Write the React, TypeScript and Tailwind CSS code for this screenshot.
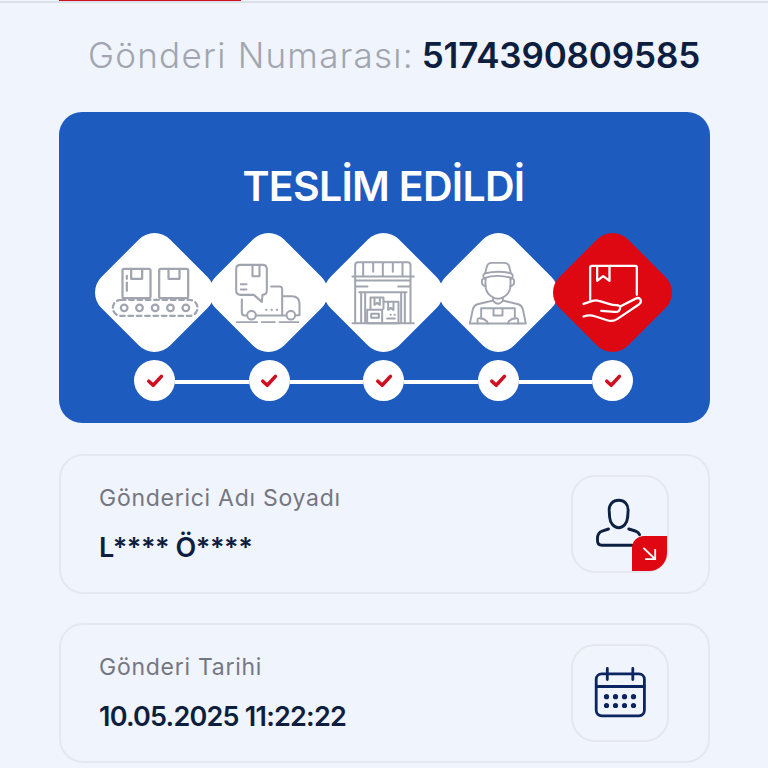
import type { ReactNode } from "react";

interface StepIconProps {
  children: ReactNode;
}

function StepIcon({ children }: StepIconProps) {
  return (
    <svg
      viewBox="58 68 270 270"
      className="h-[90px] w-[90px] -rotate-45"
      fill="none"
      stroke="currentColor"
      strokeWidth="6.8"
      strokeLinecap="round"
      strokeLinejoin="round"
    >
      {children}
    </svg>
  );
}

function ConveyorIcon() {
  return (
    <StepIcon>
      <path d="M102 130h74q5 0 5 5v78q0 5-5 5h-74q-5 0-5-5v-78q0-5 5-5Z" />
      <path d="M212 130h77q5 0 5 5v78q0 5-5 5h-77q-5 0-5-5v-78q0-5 5-5Z" />
      <path d="M123 132v28h33v-28M235 132v28h33v-28M110 151v9M110 171v25" />
      <rect x="68" y="223" width="254" height="48" rx="24" strokeDasharray="14 11" />
      <circle cx="102" cy="247" r="10" />
      <circle cx="148" cy="247" r="10" />
      <circle cx="195" cy="247" r="10" />
      <circle cx="241" cy="247" r="10" />
      <circle cx="287" cy="247" r="10" />
    </StepIcon>
  );
}

function TruckIcon() {
  return (
    <StepIcon>
      <g strokeWidth="6.2">
        <path d="M109 118h66q13 0 13 13v64q0 13-13 13l-2 21-24-21h-40q-13 0-13-13v-64q0-13 13-13Z" />
        <path d="M145 120v32h21v-32M110 176h17M110 192h17" />
        <path d="M113 222v39q0 9 9 9h6M155 270h91M201 183h25q8 0 8 8v78M235 212h28q23 0 23 23v34h-13" />
        <circle cx="142" cy="269" r="13" />
        <circle cx="260" cy="269" r="13" />
        <path d="M98 290h61M173 290h39M226 290h57" strokeWidth="5.2" />
        <path d="M186 253h1M202 253h1M218 253h1" />
      </g>
    </StepIcon>
  );
}

function DepotIcon() {
  return (
    <StepIcon>
      <g strokeWidth="6">
        <path d="M108 153v-34q0-9 9-9h148q9 0 9 9v34M100 153h184M132 111v41M191 111v41M250 111v41M162 111v28M221 111v28" />
        <path d="M108 155v138M274 155v138M111 165h161M111 183h34M237 183h34M120 200h142M126 201v92M138 201v92M246 201v92M257 201v92M100 293h184" />
        <path d="M154 250v-34h39v34M166 217v21l8-6 8 6v-21" />
        <path d="M144 253h45v40h-45zM156 265h23v12h-23z" />
        <path d="M193 229h45v64h-49M207 231v22l8-6 8 6v-22M204 279h23M214 268h1M226 268h1" />
      </g>
    </StepIcon>
  );
}

function CourierIcon() {
  return (
    <StepIcon>
      <g strokeWidth="5.8">
        <path d="M153 143l5-20q3-11 15-11h37q12 0 15 11l5 20" />
        <path d="M149 158q-5-12 5-15 38-9 75 0 10 3 5 15-43-14-85 0Z" />
        <path d="M154 158v25q2 18 17 29 20 15 41 0 15-11 17-29v-25" />
        <path d="M154 160q-11-3-11 8 0 13 12 14M229 160q11-3 11 8 0 13-12 14" />
        <path d="M177 217v9q14 17 29 0v-9M177 225l-47 11q-11 3-14 15l-9 43h168l-9-43q-3-12-14-15l-46-11" />
        <path d="M141 279v-31h101v31M178 248v22h27v-22" />
        <path d="M130 294v-10q0-7 8-6 11 0 20 9l3 7M252 294v-10q0-7-8-6-11 0-20 9l-3 7" />
      </g>
    </StepIcon>
  );
}

function DeliveredIcon() {
  return (
    <StepIcon>
      <g transform="translate(-2 0)">
        <path d="M128 223v-97q0-5 5-5h131q4 0 4 5v82" />
        <path d="M149 123v43l18-14 19 14v-43" />
        <path d="M108 235l27-9q11-3 22 1l27 8q12 4 22 4 13 0 12 8-2 14-16 12l-41-3" />
        <path d="M218 243l45-23q11-6 16 2 4 8-4 14l-65 44q-15 10-31 4l-37-12q-17-6-34 1" />
      </g>
    </StepIcon>
  );
}

const steps = [
  { id: 1, icon: <ConveyorIcon />, active: false },
  { id: 2, icon: <TruckIcon />, active: false },
  { id: 3, icon: <DepotIcon />, active: false },
  { id: 4, icon: <CourierIcon />, active: false },
  { id: 5, icon: <DeliveredIcon />, active: true },
];

function StatusCard() {
  return (
    <section className="mt-[29px] h-[311px] rounded-[23px] bg-[#1e5bbf] pt-[44px] pr-[40px] pl-[38px]">
      <h1 className="text-center text-[41px] leading-[60px] font-semibold tracking-[-0.7px] whitespace-nowrap text-white">
        TESLİM EDİLDİ
      </h1>
      <div className="mt-[17px] grid h-[119px] grid-cols-5 items-center">
        {steps.map((step) => (
          <div key={step.id} className="flex justify-center">
            <div
              className={
                step.active
                  ? "flex h-[97px] w-[97px] shrink-0 rotate-45 items-center justify-center rounded-[22px] bg-[#dd0812] text-white"
                  : "flex h-[97px] w-[97px] shrink-0 rotate-45 items-center justify-center rounded-[22px] bg-white text-[#a1a5b0]"
              }
            >
              {step.icon}
            </div>
          </div>
        ))}
      </div>
      <div className="mt-[8px] flex items-center px-[37px]">
        {steps.map((step, index) => (
          <div key={step.id} className={index > 0 ? "flex flex-1 items-center" : "flex items-center"}>
            {index > 0 && <div className="mt-0.5 h-1 flex-1 bg-white" />}
            <div className="flex h-[41px] w-[41px] items-center justify-center rounded-full bg-white">
              <svg viewBox="0 0 20 16" className="h-4 w-5" fill="none" stroke="#cf1020" strokeWidth="3.6" strokeLinecap="round" strokeLinejoin="round">
                <path d="M3.8 8.2L8.2 12.3L16.4 3.4" />
              </svg>
            </div>
          </div>
        ))}
      </div>
    </section>
  );
}

interface InfoCardProps {
  label: string;
  value: string;
  labelClass: string;
  valueClass: string;
  children: ReactNode;
}

function InfoCard({ label, value, labelClass, valueClass, children }: InfoCardProps) {
  return (
    <section className="flex h-[140px] items-center justify-between rounded-[24px] border-2 border-[#e4e8f0] pr-[39px] pl-[38px]">
      <div className="flex flex-col gap-[15px] pb-px whitespace-nowrap">
        <p className={`text-[23px] leading-[34px] text-[#747782] ${labelClass}`}>{label}</p>
        <p className={`text-[27px] leading-[36px] font-semibold text-[#0e1e3e] ${valueClass}`}>{value}</p>
      </div>
      <div className="relative flex h-[98px] w-[98px] items-center justify-center rounded-[24px] border-2 border-[#e4e7ee]">
        {children}
      </div>
    </section>
  );
}

function SenderIcon() {
  return (
    <>
      <svg viewBox="0 0 110 112" className="h-[112px] w-[110px] shrink-0" fill="none" stroke="#0c2141" strokeWidth="2.9" strokeLinecap="round">
        <path d="M53.7 32.3C59.4 32.3 63.3 36.4 63.1 42.4L62.7 49C62.1 55.4 58.3 59.7 53.7 59.7S45.1 55.4 44.6 49L44.2 42.4C44 36.4 48 32.3 53.7 32.3Z" />
        <path d="M43.5 61L37.2 63Q32.5 64.7 32.5 70.5V72.8Q32.5 77.3 37 77.3H67M63.8 61L70.3 63Q73.4 64 74.6 66.7" />
      </svg>
      <div className="absolute right-0 bottom-0 flex h-[35px] w-[35px] items-center justify-center rounded-tl-[12px] rounded-br-[18px] bg-[#df0711]">
        <svg viewBox="0 0 16 16" className="h-4 w-4" fill="none" stroke="white" strokeWidth="1.8" strokeLinecap="square">
          <path d="M2 2.5L13 13M13.2 4V13.2H4" />
        </svg>
      </div>
    </>
  );
}

function CalendarIcon() {
  return (
    <svg viewBox="0 0 110 112" className="h-[112px] w-[110px] shrink-0" fill="none" stroke="#0b2560" strokeWidth="2.8" strokeLinecap="round">
      <rect x="31.2" y="36.8" width="48.2" height="42" rx="5.5" />
      <path d="M42.3 31.5V42.5M67.8 31.5V42.5M31.5 49.5H79.2" />
      <path d="M41.5 59.7h.01M50.5 59.7h.01M59.5 59.7h.01M68.5 59.7h.01M41.5 68.5h.01M50.5 68.5h.01M59.5 68.5h.01M68.5 68.5h.01" strokeWidth="5.2" />
    </svg>
  );
}

export default function App() {
  return (
    <main className="h-[768px] w-full overflow-hidden bg-[#f0f4fc] font-['Inter','Open_Sans',sans-serif]">
      <div className="h-[3px] border-b-2 border-[#dce1e9] pl-[59px]">
        <div className="h-[1px] w-[182px] bg-[#cf111d]" />
      </div>
      <div className="pr-[58px] pl-[59px]">
        <header className="flex items-baseline justify-between pt-[24px] pr-[10px] pl-[29px] text-[35px] leading-[56px] whitespace-nowrap">
          <span className="font-light tracking-[1.25px] text-[#a1a5af]">Gönderi Numarası:</span>
          <span className="font-semibold tracking-[-0.15px] text-[#0e1e40]">5174390809585</span>
        </header>
        <StatusCard />
        <div className="mt-[31px] flex flex-col gap-[29px]">
          <InfoCard label="Gönderici Adı Soyadı" value="L**** Ö****" labelClass="tracking-[0.73px]" valueClass="tracking-[-0.45px]">
            <SenderIcon />
          </InfoCard>
          <InfoCard label="Gönderi Tarihi" value="10.05.2025 11:22:22" labelClass="tracking-[0.73px]" valueClass="tracking-[-0.77px]">
            <CalendarIcon />
          </InfoCard>
        </div>
      </div>
    </main>
  );
}
